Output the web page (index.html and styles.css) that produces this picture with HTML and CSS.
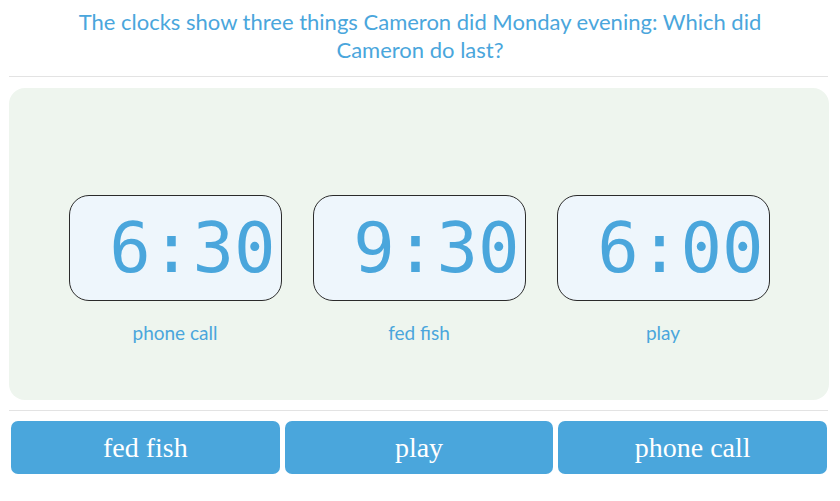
FILE: index.html
```html
<!DOCTYPE html>
<html lang="en">
<head>
    <meta charset="UTF-8">
    <meta name="viewport" content="width=device-width, initial-scale=1.0">
    <title>Clock Question</title>
    <link rel="stylesheet" href="styles.css">
</head>
<body>
    <!-- Question -->
    <div class="question">
        The clocks show three things Cameron did Monday evening: Which did Cameron do last?
    </div>
    <hr class="divider">
    <!-- Clocks -->
    <div class="clock-panel">
        <div class="clock-row">
            <div class="clock-item">
                <div class="clock-face">6:30</div>
                <div class="clock-label">phone call</div>
            </div>
            <div class="clock-item">
                <div class="clock-face">9:30</div>
                <div class="clock-label">fed fish</div>
            </div>
            <div class="clock-item">
                <div class="clock-face">6:00</div>
                <div class="clock-label">play</div>
            </div>
        </div>
    </div>
    <hr class="divider bottom">
    <!-- Answers -->
    <div class="answers">
        <button class="answer-btn">fed fish</button>
        <button class="answer-btn">play</button>
        <button class="answer-btn">phone call</button>
    </div>
</body>
</html>
```

FILE: styles.css
```css
body {
    font-family: Lato, "Open Sans", sans-serif;
    margin: 8px;
    background-color: #ffffff;
}
/* Question */
.question {
    color: #4aa6dc;
    font-size: 22px;
    line-height: 28px;
    text-align: center;
    padding: 0 50px;
}
.divider {
    border: none;
    border-top: 1px solid #e3e3e3;
    margin: 12px 4px 11px 1px;
}
.divider.bottom {
    margin: 10px 4px 10px 1px;
}
/* Clocks */
.clock-panel {
    background: #eef5ee;
    border-radius: 16px;
    height: 312px;
    margin: 0 3px 0 1px;
    padding-top: 107px;
    box-sizing: border-box;
}
.clock-row {
    display: flex;
    justify-content: center;
    gap: 31px;
}
.clock-item {
    width: 213px;
    text-align: center;
}
.clock-face {
    height: 104px;
    line-height: 104px;
    border: 1px solid #2b2b2b;
    border-radius: 20px;
    background: #eef6fc;
    color: #4aa6dc;
    font-family: "DejaVu Sans Mono", monospace;
    font-size: 69px;
    text-align: right;
    padding-right: 5px;
}
.clock-label {
    color: #4aa6dc;
    font-size: 19px;
    line-height: 24px;
    margin-top: 20px;
}
/* Answers */
.answers {
    display: grid;
    grid-template-columns: repeat(3, 1fr);
    gap: 5px;
    margin: 0 5px 0 3px;
}
.answer-btn {
    height: 53px;
    background: #4aa6dc;
    color: #ffffff;
    border: none;
    border-radius: 7px;
    font-family: "Liberation Serif", serif;
    font-size: 28px;
    padding: 0;
}
```
